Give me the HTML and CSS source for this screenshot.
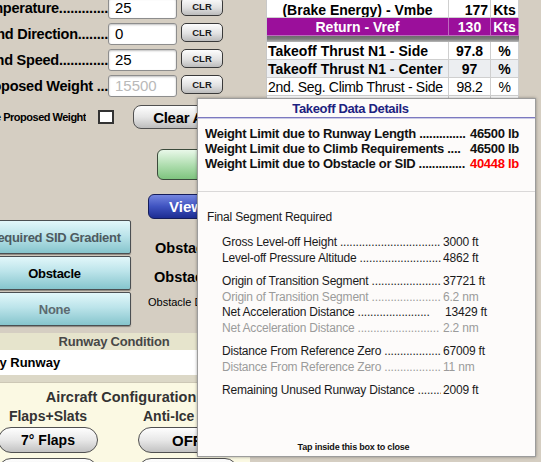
FILE: index.html
```html
<!DOCTYPE html>
<html>
<head>
<meta charset="utf-8">
<title>Takeoff Data</title>
<link rel="stylesheet" href="styles.css">
</head>
<body>
<div class="screen">
  <div class="left">
    <div class="fields">
      <div class="frow"><div class="flabel"><span>Temperature.............</span></div><div class="finput">25</div><div class="clr">CLR</div></div>
      <div class="frow"><div class="flabel"><span>Wind Direction........</span></div><div class="finput">0</div><div class="clr">CLR</div></div>
      <div class="frow"><div class="flabel"><span>Wind Speed.............</span></div><div class="finput">25</div><div class="clr">CLR</div></div>
      <div class="frow"><div class="flabel"><span>Proposed Weight ...</span></div><div class="finput ph">15500</div><div class="clr">CLR</div></div>
    </div>
    <div class="opts">
      <div class="optlabel"><span>Use Proposed Weight</span></div>
      <div class="check"></div>
      <div class="btn-clear">Clear All</div>
    </div>
    <div class="btn-green"></div>
    <div class="btn-blue">View Details</div>
    <div class="obsgroup">
      <div class="segs">
        <div class="seg dim">Required SID Gradient</div>
        <div class="seg on">Obstacle</div>
        <div class="seg dim2">None</div>
      </div>
      <div class="obsinfo">
        <div class="obs1">Obstacle Height</div>
        <div class="obs2">Obstacle Distance</div>
        <div class="obs3">Obstacle Distance from</div>
      </div>
    </div>
    <div class="runway">
      <div class="rw-head">Runway Condition</div>
      <div class="rw-val">Dry Runway</div>
      <div class="rw-gap"></div>
    </div>
    <div class="config">
      <div class="cfg-title">Aircraft Configuration</div>
      <div class="cfg-grid">
        <div class="cfg-lbl">Flaps+Slats</div>
        <div class="cfg-lbl l2">Anti-Ice</div>
        <div class="pill">7° Flaps</div>
        <div class="pill p2">OFF</div>
        <div class="pill"></div>
        <div class="pill"></div>
      </div>
    </div>
  </div>
  <div class="right">
    <div class="tbl">
      <div class="c center top">(Brake Energy) - Vmbe</div><div class="c r top">177</div><div class="c center top">Kts</div>
      <div class="c center pu">Return - Vref</div><div class="c center pu">130</div><div class="c center pu">Kts</div>
      <div class="sep"></div>
      <div class="c name">Takeoff Thrust N1 - Side</div><div class="c center">97.8</div><div class="c center">%</div>
      <div class="c name g">Takeoff Thrust N1 - Center</div><div class="c center g">97</div><div class="c center g">%</div>
      <div class="c name n">2nd. Seg. Climb Thrust - Side</div><div class="c center n">98.2</div><div class="c center n">%</div>
      <div class="c"></div><div class="c"></div><div class="c"></div>
    </div>
  </div>
</div>

<div class="popup">
  <div class="pop-title">Takeoff Data Details</div>
  <div class="limits">
    <div class="lrow"><span class="lbl">Weight Limit due to Runway Length ..............</span><span class="val">46500 lb</span></div>
    <div class="lrow"><span class="lbl">Weight Limit due to Climb Requirements ....</span><span class="val">46500 lb</span></div>
    <div class="lrow"><span class="lbl">Weight Limit due to Obstacle or SID ..............</span><span class="val red">40448 lb</span></div>
  </div>
  <div class="final">
    <div class="ftitle">Final Segment Required</div>
    <div class="group first">
      <div class="srow"><span class="lbl">Gross Level-off Height ................................</span><span class="val">3000 ft</span></div>
      <div class="srow"><span class="lbl">Level-off Pressure Altitude ..........................</span><span class="val">4862 ft</span></div>
    </div>
    <div class="group">
      <div class="srow"><span class="lbl">Origin of Transition Segment ......................</span><span class="val">37721 ft</span></div>
      <div class="srow grey"><span class="lbl">Origin of Transition Segment ......................</span><span class="val">6.2 nm</span></div>
      <div class="srow"><span class="lbl">Net Acceleration Distance .......................</span><span class="val wide">13429 ft</span></div>
      <div class="srow grey"><span class="lbl">Net Acceleration Distance ..........................</span><span class="val">2.2 nm</span></div>
    </div>
    <div class="group">
      <div class="srow"><span class="lbl">Distance From Reference Zero ...................</span><span class="val">67009 ft</span></div>
      <div class="srow grey"><span class="lbl">Distance From Reference Zero ...................</span><span class="val">11 nm</span></div>
    </div>
    <div class="group">
      <div class="srow"><span class="lbl">Remaining Unused Runway Distance .........</span><span class="val">2009 ft</span></div>
    </div>
  </div>
  <div class="tap">Tap inside this box to close</div>
</div>
</body>
</html>
```

FILE: styles.css
```css
* { box-sizing: border-box; }
html, body { margin: 0; padding: 0; }
body {
  width: 541px;
  height: 462px;
  overflow: hidden;
  position: relative;
  background: #d5cec2;
  font-family: "Liberation Sans", Arial, sans-serif;
  color: #000;
}

.screen { display: flex; align-items: flex-start; height: 462px; overflow: hidden; }
.left { flex: 0 0 266px; width: 266px; }

/* input rows */
.fields { margin-top: -3px; display: flex; flex-direction: column; gap: 4px; }
.frow { display: flex; align-items: flex-start; height: 22px; }
.flabel {
  width: 108px; height: 22px;
  display: flex; justify-content: flex-end; align-items: center;
  white-space: nowrap; overflow: hidden;
  font-weight: bold; font-size: 14.5px; letter-spacing: -0.25px;
}
.finput {
  width: 69px; height: 22px;
  background: #fff;
  border: 1px solid #8d8d8d;
  border-radius: 3px;
  box-shadow: inset 0 1px 2px rgba(0,0,0,0.25);
  font-size: 15px; line-height: 20px;
  padding-left: 6px;
}
.finput.ph { color: #b9b9b9; }
.clr {
  margin-left: 4px;
  width: 42px; height: 19px;
  border: 1px solid #3a3a3a;
  border-radius: 5px;
  background: linear-gradient(#fdfdfd, #e2e2e2 55%, #bcbcbc);
  font-weight: bold; font-size: 9.5px; color: #1a1a1a;
  display: flex; align-items: center; justify-content: center;
}

/* options row */
.opts { display: flex; align-items: center; margin-top: 8px; height: 24px; }
.optlabel {
  flex: 0 0 86px;
  display: flex; justify-content: flex-end;
  white-space: nowrap; overflow: hidden;
  font-weight: bold; font-size: 11px; letter-spacing: -0.5px;
}
.check {
  flex: 0 0 16px;
  margin-left: 12px;
  height: 14px;
  border: 2px solid #333;
  background: #fff;
}
.btn-clear {
  flex: 0 0 98px;
  margin-left: 19px;
  height: 24px;
  border: 1px solid #505050;
  border-radius: 8px;
  background: linear-gradient(#fefefe, #e6e6e6 50%, #bdbdbd);
  font-weight: bold; font-size: 15px; letter-spacing: -0.3px;
  display: flex; align-items: center; justify-content: center;
}

.btn-green {
  margin: 20px 0 0 157px;
  width: 95px; height: 31px;
  border: 1px solid #3b4a3b;
  border-radius: 6px;
  background: linear-gradient(#e9f8e9, #acdcac 55%, #7fc47f);
}
.btn-blue {
  margin: 14px 0 0 148px;
  width: 104px; height: 25px;
  border: 1px solid #151d5a;
  border-radius: 6px;
  background: linear-gradient(#7486e0, #3f53c0 50%, #1d2d92);
  color: #fff;
  font-weight: bold; font-size: 15px; line-height: 23px;
  padding-left: 20px;
  white-space: nowrap; overflow: hidden;
}

/* obstacle segment */
.obsgroup { display: flex; margin-top: 1px; }
.segs {
  flex: 0 0 153px;
  margin-left: -22px;
  display: flex; flex-direction: column; gap: 2px;
}
.seg {
  height: 34px;
  border: 1px solid #4b4f52;
  border-radius: 2px;
  background: linear-gradient(#e2f7fa, #bce4ea 45%, #86c5cd);
  box-shadow: 0 1px 1px rgba(0,0,0,0.35);
  font-weight: bold; font-size: 13px; letter-spacing: -0.3px;
  display: flex; align-items: center; justify-content: center;
  white-space: nowrap;
}
.seg.dim { color: #4d5a60; }
.seg.dim2 { color: #5c6a70; }
.seg.on { color: #000; }

.obsinfo { flex: 0 0 49px; margin-left: 17px; white-space: nowrap; overflow: hidden; }
.obs1 { margin-top: 18px; line-height: 20px; padding-left: 7px; font-weight: bold; font-size: 14.5px; }
.obs2 { margin-top: 9px; line-height: 20px; padding-left: 6px; font-weight: bold; font-size: 14.5px; }
.obs3 { margin-top: 8px; line-height: 14px; font-size: 11px; }

/* runway condition */
.runway { margin-top: 7px; width: 250px; }
.rw-head {
  height: 17px;
  background: #e6e4cc;
  font-weight: bold; font-size: 13px; letter-spacing: -0.2px;
  color: #474747;
  text-align: center; line-height: 18px;
  padding-right: 22px;
}
.rw-val {
  height: 25px;
  background: #fff;
  font-weight: bold; font-size: 13px; line-height: 25px;
  text-indent: -15px;
  white-space: nowrap;
  overflow: hidden;
}
.rw-gap { height: 8px; background: #dcd8c7; border-bottom: 1px solid #cdc8b6; }

/* configuration */
.config { width: 250px; height: 79px; overflow: hidden; background: #fbf9e3; padding-top: 5px; }
.cfg-title {
  font-weight: bold; font-size: 14.5px; line-height: 18px;
  color: #333; text-align: center; padding-right: 8px;
}
.cfg-grid {
  display: grid;
  grid-template-columns: 100px 100px;
  column-gap: 40px;
  margin-left: -2px;
}
.cfg-lbl {
  line-height: 20px; margin-bottom: 1px;
  font-weight: bold; font-size: 14px; color: #333;
  text-align: center;
}
.cfg-lbl.l2 { text-align: left; padding-left: 5px; }
.pill {
  height: 26px; margin-bottom: 5px;
  border: 1px solid #505050;
  border-radius: 13px;
  background: linear-gradient(#fefefe, #e8e8e8 50%, #c2c2c2);
  font-weight: bold; font-size: 14px;
  display: flex; align-items: center; justify-content: center;
}
.pill.p2 { padding-right: 2px; font-size: 15px; }

/* right table */
.right { flex: 0 0 253px; width: 253px; }
.tbl {
  display: grid;
  grid-template-columns: 182px 42px 28px;
  border-left: 1px solid #c8c8c8;
  background: #fff;
}
.c {
  height: 18px;
  border-right: 1px solid #cfcfcf;
  border-bottom: 1px solid #cfcfcf;
  font-size: 14px; line-height: 18px; font-weight: bold;
  white-space: nowrap; overflow: hidden;
}
.c.top { line-height: 20px; }
.c.center { text-align: center; }
.c.r { text-align: right; padding-right: 2px; }
.c.name { padding-left: 1px; }
.c.pu { background: #9b0f9b; color: #fff; border-color: #bf6abf; }
.c.g { background: #eceef1; }
.c.n { font-weight: normal; letter-spacing: -0.3px; }
.sep {
  grid-column: 1 / -1;
  height: 6px;
  background: linear-gradient(#6c6c6c, #7c7c7c 50%, #b8b8b8);
}

/* popup */
.popup {
  position: absolute;
  left: 197px; top: 98px;
  width: 339px; height: 359px;
  background: #fdfbfa;
  border: 1px solid #9c9c9c;
  box-shadow: 0 0 3px rgba(0,0,0,0.35);
  display: flex; flex-direction: column;
}
.pop-title {
  height: 19px;
  border-bottom: 1px solid #7c79c0;
  box-shadow: 0 1px 0 #cbcae6;
  text-align: center;
  padding-right: 32px;
  color: #1d2280;
  font-weight: bold; font-size: 13px; line-height: 19px; letter-spacing: -0.35px;
}
.limits {
  padding: 8px 0 20px 7px;
  border-bottom: 1px solid #dad8d8;
  font-weight: bold; font-size: 13px; letter-spacing: -0.3px;
  color: #111;
}
.lrow { display: flex; line-height: 15px; white-space: nowrap; }
.lrow .lbl { flex: 0 0 264px; overflow: hidden; }
.lrow .val { padding-left: 1px; }
.red { color: #f00; }

.final {
  padding: 18px 0 0 9px;
  font-size: 12px; letter-spacing: -0.2px;
  color: #1a1a1a;
}
.ftitle { line-height: 15px; }
.group { margin-top: 8px; padding-left: 15px; }
.group.first { margin-top: 10px; }
.srow { display: flex; line-height: 15.5px; white-space: nowrap; }
.srow .lbl { flex: 0 0 219px; overflow: hidden; }
.srow .val { padding-left: 2px; }
.srow .val.wide { padding-left: 4px; }
.srow.grey { color: #9b9b9b; }

.tap {
  margin-top: auto;
  padding: 0 26px 2px 0;
  text-align: center;
  font-weight: bold; font-size: 9px; line-height: 14px; letter-spacing: -0.2px;
  color: #111;
}
```
